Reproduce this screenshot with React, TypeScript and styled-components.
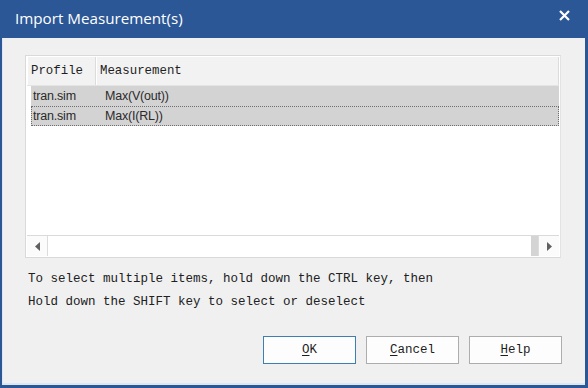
import React from "react";
import styled, { createGlobalStyle } from "styled-components";

const Global = createGlobalStyle`
  html, body { margin: 0; padding: 0; background: #f0f0f0; }
  body { width: 588px; height: 388px; overflow: hidden; }
`;

const Window = styled.div`
  width: 588px;
  height: 388px;
  box-sizing: border-box;
  display: flex;
  flex-direction: column;
  background: #2b5797;
  padding: 0 3px 3px 2px;
`;

const TitleBar = styled.div`
  height: 38px;
  flex: none;
  display: flex;
  align-items: center;
  justify-content: space-between;
  padding: 0 14px 3px 13px;
  box-sizing: border-box;
  color: #ffffff;
  font-family: "Open Sans", "Noto Sans", sans-serif;
  font-size: 15.2px;
`;

const Close = styled.div`
  width: 14px;
  height: 14px;
  display: flex;
  align-items: center;
  justify-content: center;
  margin-bottom: 4px;
`;

const Body = styled.div`
  flex: 1;
  background: #f0f0f0;
  border-left: 1px solid #dbe7f5;
  border-bottom: 2px solid #dbe7f5;
  display: flex;
  flex-direction: column;
  padding: 17px 23px 0 22px;
  font-family: "Liberation Mono", "DejaVu Sans Mono", monospace;
`;

const ListBox = styled.div`
  width: 536px;
  height: 203px;
  box-sizing: border-box;
  border: 1px solid #d9d9d9;
  border-right-color: #e3e3e3;
  background: #ffffff;
  display: flex;
  flex-direction: column;
  padding: 1px;
`;

const Header = styled.div`
  height: 28px;
  display: flex;
  flex: none;
  background: #f2f2f2;
  border-bottom: 1px solid #e4e4e4;
`;

const HeaderCell = styled.div<{ $w?: number }>`
  ${(p) => (p.$w ? `width: ${p.$w}px; flex: none;` : "flex: 1;")}
  box-sizing: border-box;
  display: flex;
  align-items: center;
  padding-left: 3px;
  font-size: 12.4px;
  color: #1e1e1e;
  border-right: 1px solid #dcdcdc;
  border-left: 1px solid #ffffff;
`;

const Rows = styled.div`
  flex: 1;
  padding: 0 0 0 4px;
`;

const Row = styled.div<{ $focus?: boolean }>`
  height: 20px;
  box-sizing: border-box;
  display: flex;
  align-items: center;
  background: #d3d3d3;
  border: 1px dotted ${(p) => (p.$focus ? "#6e6e6e" : "transparent")};
  font-family: "Liberation Sans", Arial, sans-serif;
  font-size: 12.5px;
  color: #2a2a2a;
  letter-spacing: -0.2px;
`;

const RowCell = styled.div<{ $w?: number }>`
  ${(p) => (p.$w ? `width: ${p.$w}px; flex: none;` : "flex: 1;")}
  padding-left: 1px;
`;

const HScroll = styled.div`
  height: 20px;
  flex: none;
  display: flex;
  border-top: 1px solid #dadada;
  background: #ffffff;
`;

const ScrollButton = styled.div<{ $side: "l" | "r" }>`
  width: 20px;
  flex: none;
  display: flex;
  align-items: center;
  justify-content: center;
  background: #fbfbfb;
  ${(p) => (p.$side === "l" ? "border-right: 1px solid #dcdcdc;" : "border-left: 1px solid #dcdcdc;")}
`;

const Track = styled.div`
  flex: 1;
  display: flex;
  justify-content: flex-end;
`;

const TrackGap = styled.div`
  width: 7px;
  background: #d4d4d4;
`;

const Help = styled.div`
  margin-top: 10px;
  padding-left: 3px;
  font-size: 12.5px;
  line-height: 23px;
  color: #202020;
  white-space: pre;
`;

const Buttons = styled.div`
  margin-top: 22px;
  display: flex;
  justify-content: flex-end;
  gap: 10px;
`;

const Button = styled.button<{ $default?: boolean }>`
  width: 93px;
  height: 28px;
  box-sizing: border-box;
  background: #fdfdfd;
  border: 1px solid ${(p) => (p.$default ? "#3c7fb1" : "#adadad")};
  font-family: "Liberation Mono", "DejaVu Sans Mono", monospace;
  font-size: 12.5px;
  color: #1e1e1e;
  padding: 0;
  u { text-decoration: underline; text-underline-offset: 2px; }
`;

export default function App() {
  return (
    <>
      <Global />
      <Window>
        <TitleBar>
          <span>Import Measurement(s)</span>
          <Close>
            <svg width="11" height="11" viewBox="0 0 11 11">
              <path d="M1 1L10 10M10 1L1 10" stroke="#ffffff" strokeWidth="2.2" />
            </svg>
          </Close>
        </TitleBar>
        <Body>
          <ListBox>
            <Header>
              <HeaderCell $w={69}>Profile</HeaderCell>
              <HeaderCell>Measurement</HeaderCell>
            </Header>
            <Rows>
              <Row>
                <RowCell $w={71}>tran.sim</RowCell>
                <RowCell>Max(V(out))</RowCell>
              </Row>
              <Row $focus>
                <RowCell $w={71}>tran.sim</RowCell>
                <RowCell>Max(I(RL))</RowCell>
              </Row>
            </Rows>
            <HScroll>
              <ScrollButton $side="l">
                <svg width="5" height="9" viewBox="0 0 5 9">
                  <path d="M5 0L0 4.5L5 9Z" fill="#606060" />
                </svg>
              </ScrollButton>
              <Track>
                <TrackGap />
              </Track>
              <ScrollButton $side="r">
                <svg width="5" height="9" viewBox="0 0 5 9">
                  <path d="M0 0L5 4.5L0 9Z" fill="#606060" />
                </svg>
              </ScrollButton>
            </HScroll>
          </ListBox>
          <Help>
            {"To select multiple items, hold down the CTRL key, then\nHold down the SHIFT key to select or deselect"}
          </Help>
          <Buttons>
            <Button $default>
              <u>O</u>K
            </Button>
            <Button>
              <u>C</u>ancel
            </Button>
            <Button>
              <u>H</u>elp
            </Button>
          </Buttons>
        </Body>
      </Window>
    </>
  );
}
